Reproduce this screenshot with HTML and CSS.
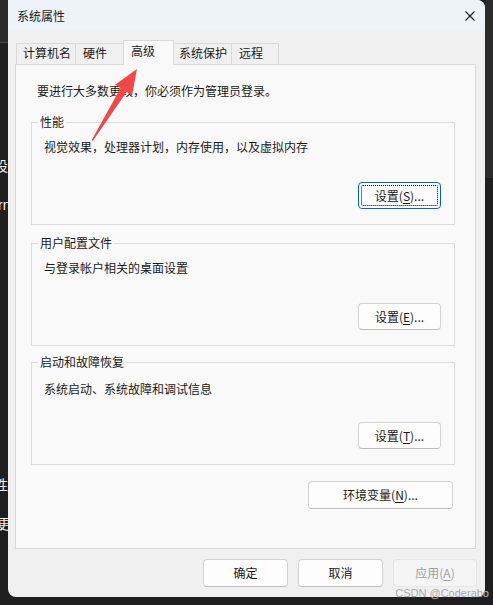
FILE: index.html
```html
<!DOCTYPE html>
<html lang="zh-CN">
<head>
<meta charset="utf-8">
<title>系统属性</title>
<link rel="stylesheet" href="styles.css">
</head>
<body>
<div class="desktop">
  <div class="strip-left"></div>
  <div class="strip-right"></div>
  <span class="frag f1">设</span>
  <span class="frag f2">rn</span>
  <span class="frag f3">性</span>
  <span class="frag f4">更新</span>

  <div class="window">
    <div class="titlebar">
      <span class="title">系统属性</span>
      <svg class="close" viewBox="0 0 10 10" width="10" height="10"><path d="M0.5 0.5 L9.5 9.5 M9.5 0.5 L0.5 9.5" stroke="#1a1a1a" stroke-width="1.1" fill="none"/></svg>
    </div>
    <div class="body">
      <div class="tabs">
        <div class="tab first w60">计算机名</div>
        <div class="tab w49">硬件</div>
        <div class="tab selected">高级</div>
        <div class="tab w60">系统保护</div>
        <div class="tab w47">远程</div>
      </div>
      <div class="panel">
        <div class="intro">要进行大多数更改，你必须作为管理员登录。</div>
        <fieldset class="group">
          <legend>性能</legend>
          <div class="desc">视觉效果，处理器计划，内存使用，以及虚拟内存</div>
          <div class="row"><button class="btn btn-set focus">设置(<u>S</u>)...</button></div>
        </fieldset>
        <fieldset class="group g2">
          <legend>用户配置文件</legend>
          <div class="desc">与登录帐户相关的桌面设置</div>
          <div class="row"><button class="btn btn-set">设置(<u>E</u>)...</button></div>
        </fieldset>
        <fieldset class="group g3">
          <legend>启动和故障恢复</legend>
          <div class="desc">系统启动、系统故障和调试信息</div>
          <div class="row"><button class="btn btn-set">设置(<u>T</u>)...</button></div>
        </fieldset>
        <div class="env-row"><button class="btn btn-env">环境变量(<u>N</u>)...</button></div>
      </div>
      <div class="footer">
        <button class="btn btn-foot">确定</button>
        <button class="btn btn-foot">取消</button>
        <button class="btn btn-foot last disabled">应用(<u>A</u>)</button>
      </div>
    </div>
  </div>

  <svg class="arrow" viewBox="0 0 493 605" width="493" height="605">
    <polygon points="91.5,140.5 120.6,88.1 115.1,84.7 137,69 132.1,95.4 126.6,91.9 92.8,140.9" fill="#f04848"/>
  </svg>
  <div class="watermark">CSDN @Coderabo</div>
</div>
</body>
</html>
```

FILE: styles.css
```css
* { box-sizing: border-box; }
html, body { margin: 0; padding: 0; }
body {
  background: #1e1e1e;
  font-family: "Noto Sans CJK SC", "Noto Sans", sans-serif;
  font-size: 12px;
  color: #1a1a1a;
  overflow: hidden;
}
.desktop {
  position: relative;
  width: 493px;
  height: 605px;
  padding-left: 8px;
  display: flex;
  align-items: flex-start;
}
.strip-left {
  position: absolute;
  left: 0; top: 0;
  width: 8px; height: 43px;
  background: #2b2b2b;
  border-bottom: 1px solid #4a4a4a;
}
.strip-right {
  position: absolute;
  right: 0; top: 0;
  width: 8px; height: 178px;
  background: #2b2b2b;
}
.frag {
  position: absolute;
  color: #f0f0f0;
  font-size: 14px;
  line-height: 16px;
  white-space: nowrap;
}
.f1 { left: -6px; top: 157px; }
.f2 { left: -2px; top: 197px; font-family: "Liberation Sans", sans-serif; }
.f3 { left: -6px; top: 476px; }
.f4 { left: -3px; top: 515px; }

.window {
  position: relative;
  z-index: 1;
  width: 477px;
  height: 597px;
  background: #f0f0f0;
  border-radius: 0 8px 8px 8px;
  display: flex;
  flex-direction: column;
  overflow: hidden;
}
.titlebar {
  height: 31px;
  flex: none;
  background: #eef2f9;
  display: flex;
  align-items: center;
  justify-content: space-between;
  padding: 0 10px 0 9px;
}
.title { line-height: 16px; }
.close { display: block; }

.body {
  flex: 1;
  display: flex;
  flex-direction: column;
  padding: 9px 8px 10px 7px;
}
.tabs {
  display: flex;
  align-items: flex-start;
  height: 25px;
  margin: 0 0 -1px 1px;
}
.tab {
  height: 21px;
  margin-top: 3px;
  border-top: 1px solid #d9d9d9;
  border-right: 1px solid #d9d9d9;
  background: #f0f0f0;
  padding: 1px 0 0 7px;
  line-height: 16px;
  white-space: nowrap;
}
.tab.first { border-left: 1px solid #d9d9d9; padding-left: 6px; }
.w60 { width: 60px; }
.w49 { width: 49px; }
.w47 { width: 47px; }
.tab.selected {
  position: relative;
  z-index: 2;
  width: 51px;
  height: 25px;
  margin: 0 -2px;
  border-left: 1px solid #d9d9d9;
  background: #f9f9f9;
  padding: 2px 0 0 7px;
}

.panel {
  height: 485px;
  margin-right: 1px;
  background: #f9f9f9;
  border: 1px solid #d9d9d9;
  padding: 18px 20px 0 15px;
}
.intro { line-height: 16px; padding-left: 6px; }
.group {
  margin: 15px 0 0;
  border: 1px solid #dcdcdc;
  padding: 9px 13px 15px 6px;
  min-inline-size: 0;
}
.group.g2 { margin-top: 10px; }
.group.g3 { margin-top: 8px; padding-top: 11px; }
.group.g3 .row { margin-top: 25px; }
.group legend {
  padding: 0 2px;
  line-height: 16px;
}
.desc { line-height: 16px; padding-left: 6px; }
.row {
  display: flex;
  justify-content: flex-end;
  margin-top: 27px;
}
.env-row {
  display: flex;
  justify-content: flex-end;
  margin-top: 16px;
  padding-right: 2px;
}

.btn {
  font-family: inherit;
  font-size: 12px;
  line-height: 16px;
  color: #1a1a1a;
  background: #fdfdfd;
  border: 1px solid #d3d3d3;
  border-bottom-color: #bdbdbd;
  border-radius: 4px;
  padding: 0;
  margin: 0;
  display: flex;
  align-items: center;
  justify-content: center;
}
.btn u { text-underline-offset: 2px; }
.btn-set { width: 83px; height: 27px; }
.btn-env { width: 145px; height: 28px; }
.btn-foot { width: 85px; height: 28px; }
.btn-foot.last { width: 84px; }
.btn.focus {
  position: relative;
  border: 1px solid #0067c0;
}
.btn.focus::after {
  content: "";
  position: absolute;
  inset: 2px;
  border: 1px dotted #000;
  border-radius: 2px;
}
.btn.disabled {
  background: #f5f5f5;
  border-color: #e6e6e6;
  color: #a0a0a0;
}
.footer {
  display: flex;
  justify-content: flex-end;
  gap: 10px;
  margin-top: 10px;
}

.arrow {
  position: absolute;
  left: 0; top: 0;
  z-index: 3;
  pointer-events: none;
}
.watermark {
  position: absolute;
  right: 4px;
  top: 586px;
  z-index: 4;
  font-family: "Liberation Sans", sans-serif;
  font-size: 11px;
  line-height: 14px;
  color: #a8a8a8;
  text-shadow: 0 0 1px rgba(255,255,255,0.5);
  white-space: nowrap;
}
```
